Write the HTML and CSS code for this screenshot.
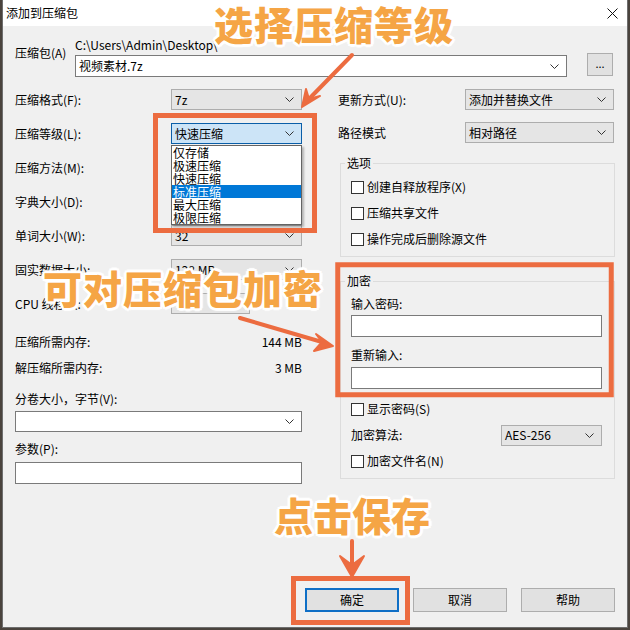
FILE: index.html
```html
<!DOCTYPE html>
<html lang="zh-CN">
<head>
<meta charset="utf-8">
<title>添加到压缩包</title>
<link rel="stylesheet" href="styles.css">
</head>
<body>
<div class="window">
  <div class="titlebar">
    <span class="title">添加到压缩包</span>
    <svg class="close" width="11" height="11" viewBox="0 0 11 11"><path d="M0.5 0.5L10.5 10.5M10.5 0.5L0.5 10.5" stroke="#111" stroke-width="1" fill="none"/></svg>
  </div>

  <div class="content">
    <div class="archive-row">
      <div class="archive-lbl">压缩包(A)</div>
      <div class="archive-main">
        <div class="path">C:\Users\Admin\Desktop\</div>
        <div class="archive-line">
          <div class="combo white w-archive"><span>视频素材.7z</span><svg class="chev" width="9" height="5" viewBox="0 0 9 5"><polyline points="0.5,0.5 4.5,4.5 8.5,0.5" fill="none" stroke="#333" stroke-width="1"/></svg></div>
          <div class="btn dots">...</div>
        </div>
      </div>
    </div>

    <div class="columns">
      <div class="col-left">
        <div class="row"><div class="lbl">压缩格式(F):</div><div class="combo w-l"><span>7z</span><svg class="chev" width="9" height="5" viewBox="0 0 9 5"><polyline points="0.5,0.5 4.5,4.5 8.5,0.5" fill="none" stroke="#333" stroke-width="1"/></svg></div></div>
        <div class="row"><div class="lbl">压缩等级(L):</div><div class="combo focus w-l"><span>快速压缩</span><svg class="chev" width="9" height="5" viewBox="0 0 9 5"><polyline points="0.5,0.5 4.5,4.5 8.5,0.5" fill="none" stroke="#333" stroke-width="1"/></svg></div></div>
        <div class="row"><div class="lbl">压缩方法(M):</div><div class="combo w-l"><span></span></div></div>
        <div class="row"><div class="lbl">字典大小(D):</div><div class="combo w-l"><span></span></div></div>
        <div class="row"><div class="lbl">单词大小(W):</div><div class="combo w-l"><span>32</span><svg class="chev" width="9" height="5" viewBox="0 0 9 5"><polyline points="0.5,0.5 4.5,4.5 8.5,0.5" fill="none" stroke="#333" stroke-width="1"/></svg></div></div>
        <div class="row"><div class="lbl">固实数据大小:</div><div class="combo w-l"><span>128 MB</span><svg class="chev" width="9" height="5" viewBox="0 0 9 5"><polyline points="0.5,0.5 4.5,4.5 8.5,0.5" fill="none" stroke="#333" stroke-width="1"/></svg></div></div>
        <div class="row last"><div class="lbl">CPU 线程数:</div><div class="combo w-cpu"><span></span></div></div>

        <div class="mem">
          <div class="mem-row"><span>压缩所需内存:</span><span>144 MB</span></div>
          <div class="mem-row"><span>解压缩所需内存:</span><span>3 MB</span></div>
        </div>

        <div class="field-lbl first">分卷大小，字节(V):</div>
        <div class="combo white w-full vol"><span></span><svg class="chev" width="9" height="5" viewBox="0 0 9 5"><polyline points="0.5,0.5 4.5,4.5 8.5,0.5" fill="none" stroke="#333" stroke-width="1"/></svg></div>
        <div class="field-lbl second">参数(P):</div>
        <div class="input w-full param"></div>
      </div>

      <div class="col-right">
        <div class="row r1"><div class="lbl-r">更新方式(U):</div><div class="combo w-r"><span>添加并替换文件</span><svg class="chev" width="9" height="5" viewBox="0 0 9 5"><polyline points="0.5,0.5 4.5,4.5 8.5,0.5" fill="none" stroke="#333" stroke-width="1"/></svg></div></div>
        <div class="row r2"><div class="lbl-r">路径模式</div><div class="combo w-r"><span>相对路径</span><svg class="chev" width="9" height="5" viewBox="0 0 9 5"><polyline points="0.5,0.5 4.5,4.5 8.5,0.5" fill="none" stroke="#333" stroke-width="1"/></svg></div></div>

        <fieldset class="group options">
          <legend>选项</legend>
          <div class="check"><span class="box"></span>创建自释放程序(X)</div>
          <div class="check"><span class="box"></span>压缩共享文件</div>
          <div class="check"><span class="box"></span>操作完成后删除源文件</div>
        </fieldset>

        <fieldset class="group encrypt">
          <legend>加密</legend>
          <div class="enc-lbl pw1">输入密码:</div>
          <div class="input w-pw in1"></div>
          <div class="enc-lbl pw2">重新输入:</div>
          <div class="input w-pw in2"></div>
          <div class="check show"><span class="box"></span>显示密码(S)</div>
          <div class="algo"><span>加密算法:</span><div class="combo w-algo"><span>AES-256</span><svg class="chev" width="9" height="5" viewBox="0 0 9 5"><polyline points="0.5,0.5 4.5,4.5 8.5,0.5" fill="none" stroke="#333" stroke-width="1"/></svg></div></div>
          <div class="check"><span class="box"></span>加密文件名(N)</div>
        </fieldset>
      </div>
    </div>
  </div>

  <div class="buttons">
    <div class="btn action default">确定</div>
    <div class="btn action">取消</div>
    <div class="btn action">帮助</div>
  </div>

  <div class="overlay">
    <ul class="dropdown">
      <li>仅存储</li>
      <li>极速压缩</li>
      <li>快速压缩</li>
      <li class="sel">标准压缩</li>
      <li>最大压缩</li>
      <li>极限压缩</li>
    </ul>

    <svg class="marks" width="630" height="630" viewBox="0 0 630 630">
      <g fill="none" stroke="#ec6c40" stroke-width="5">
        <rect x="155.5" y="115.5" width="159" height="115"/>
        <rect x="337.75" y="264.75" width="273.5" height="130"/>
        <rect x="293.5" y="578.5" width="114" height="44"/>
      </g>
      <g stroke="#ec6c40" stroke-width="4" stroke-linecap="round" fill="#ec6c40">
        <line x1="352" y1="55" x2="309" y2="99"/>
        <polygon points="302,107 306,89 309,99 320,96" stroke-width="2" stroke-linejoin="round"/>
        <line x1="240" y1="318" x2="322" y2="342"/>
        <polygon points="333,346 316,334 322,342 314,351" stroke-width="2" stroke-linejoin="round"/>
        <line x1="352" y1="541" x2="352" y2="566"/>
        <polygon points="352,577 340,556 352,565 364,556" stroke-width="2" stroke-linejoin="round"/>
      </g>
    </svg>

    <div class="note n1">选择压缩等级</div>
    <div class="note n2">可对压缩包加密</div>
    <div class="note n3">点击保存</div>
  </div>
</div>
</body>
</html>
```

FILE: styles.css
```css
* { box-sizing: border-box; }

html, body {
  margin: 0;
  width: 630px;
  height: 630px;
  overflow: hidden;
}

body {
  background: #4a433d;
  font-family: "Noto Sans CJK SC", "Noto Sans", sans-serif;
  font-size: 12px;
  color: #000;
}

.window {
  position: relative;
  margin-left: 2px;
  width: 626px;
  height: 628px;
  background: #f0f0f0;
  border: 1px solid #6e6e6e;
  border-top: 0;
  display: flex;
  flex-direction: column;
}

.titlebar {
  height: 26px;
  flex: 0 0 26px;
  background: #fff;
  display: flex;
  align-items: center;
  justify-content: space-between;
  padding: 0 9px 0 3px;
}
.title { line-height: 14px; }

.content { padding: 12px 11px 0 12px; }

/* archive */
.archive-row { display: flex; }
.archive-lbl { width: 60px; padding-top: 8px; line-height: 14px; }
.archive-main { display: flex; flex-direction: column; }
.path { line-height: 14px; height: 14px; }
.archive-line { display: flex; align-items: flex-start; margin-top: 3px; gap: 20px; }

/* combos */
.combo {
  height: 21px;
  background: #e5e5e5;
  border: 1px solid #adadad;
  display: flex;
  align-items: center;
  justify-content: space-between;
  padding: 0 7px 0 3px;
  line-height: 14px;
}
.combo.white { background: #fff; border-color: #7a7a7a; }
.combo.focus { background: #cce4f7; border-color: #0a5ea8; }
.chev { flex: 0 0 auto; }

.w-archive { width: 492px; height: 22px; }
.w-l { width: 131px; }
.w-cpu { width: 79px; }
.w-r { width: 149px; }
.w-full { width: 287px; }
.w-algo { width: 101px; }
.w-pw { width: 251px; }

.btn {
  background: #e1e1e1;
  border: 1px solid #adadad;
  display: flex;
  align-items: center;
  justify-content: center;
  line-height: 14px;
}
.dots { width: 26px; height: 23px; margin-top: -2px; font-size: 11px; padding-bottom: 4px; }

.input { background: #fff; border: 1px solid #7a7a7a; height: 22px; }

/* columns */
.columns {
  display: grid;
  grid-template-columns: 287px 277px;
  column-gap: 36px;
  margin-top: 12px;
}

.row { display: flex; align-items: center; height: 21px; margin-bottom: 13px; }
.row.last { margin-bottom: 0; }
.lbl { flex: 0 0 156px; line-height: 14px; }
.lbl-r { flex: 0 0 127px; line-height: 14px; }
.row.r1 { margin-bottom: 12px; }
.row.r2 { margin-bottom: 0; }

.mem { margin-top: 18px; display: flex; flex-direction: column; gap: 6px; }
.mem-row { display: flex; justify-content: space-between; height: 20px; line-height: 20px; }

.field-lbl { line-height: 14px; }
.field-lbl.first { margin-top: 14px; }
.vol { margin-top: 5px; }
.field-lbl.second { margin-top: 10px; }
.param { margin-top: 6px; }

/* groups */
.group {
  margin: 13px 0 0 2px;
  min-width: 0;
  width: 275px;
  border: 1px solid #dcdcdc;
  padding: 4px 12px 4px 10px;
}
.group legend { margin-left: -6px; padding: 0 2px; line-height: 14px; }
.encrypt { margin-top: 17px; padding-top: 0; }

.check { display: flex; align-items: center; height: 26px; line-height: 14px; }
.box {
  width: 13px;
  height: 13px;
  background: #fff;
  border: 1px solid #333;
  margin-right: 3px;
  flex: 0 0 13px;
}

.enc-lbl { line-height: 14px; }
.pw1 { margin-top: 9px; }
.in1 { margin-top: 4px; }
.pw2 { margin-top: 11px; }
.in2 { margin-top: 5px; }
.check.show { margin-top: 7px; }
.algo { display: flex; align-items: center; justify-content: space-between; height: 26px; line-height: 14px; }

/* buttons */
.buttons {
  margin-top: auto;
  display: flex;
  justify-content: flex-end;
  gap: 14px;
  padding: 0 12px 15px 0;
}
.action { width: 94px; height: 24px; }
.action.default { border: 2px solid #0f6fc6; }

/* overlays */
.overlay {
  position: absolute;
  left: -3px;
  top: 0;
  width: 630px;
  height: 630px;
  pointer-events: none;
}
.dropdown {
  position: absolute;
  left: 171px;
  top: 145px;
  width: 131px;
  margin: 0;
  padding: 0;
  list-style: none;
  background: #fff;
  border: 1px solid #646464;
  box-shadow: 2px 2px 2px rgba(0,0,0,0.25);
}
.dropdown li { height: 13px; line-height: 13px; padding-left: 1px; }
.dropdown li.sel { background: #0078d7; color: #fff; }

.marks { position: absolute; left: 0; top: 0; }

.note {
  position: absolute;
  font-family: "Noto Sans CJK SC", sans-serif;
  font-weight: 900;
  font-size: 39px;
  line-height: 1;
  color: #f5a545;
  white-space: nowrap;
  text-shadow:
    2px 0 0 #fff, -2px 0 0 #fff, 0 2px 0 #fff, 0 -2px 0 #fff,
    2px 2px 0 #fff, -2px -2px 0 #fff, 2px -2px 0 #fff, -2px 2px 0 #fff,
    3px 0 1px #fff, -3px 0 1px #fff, 0 3px 1px #fff, 0 -3px 1px #fff;
}
.n1 { left: 214px; top: 4px; letter-spacing: 1px; }
.n2 { left: 43px; top: 268px; letter-spacing: 1px; }
.n3 { left: 274px; top: 495px; }
```
